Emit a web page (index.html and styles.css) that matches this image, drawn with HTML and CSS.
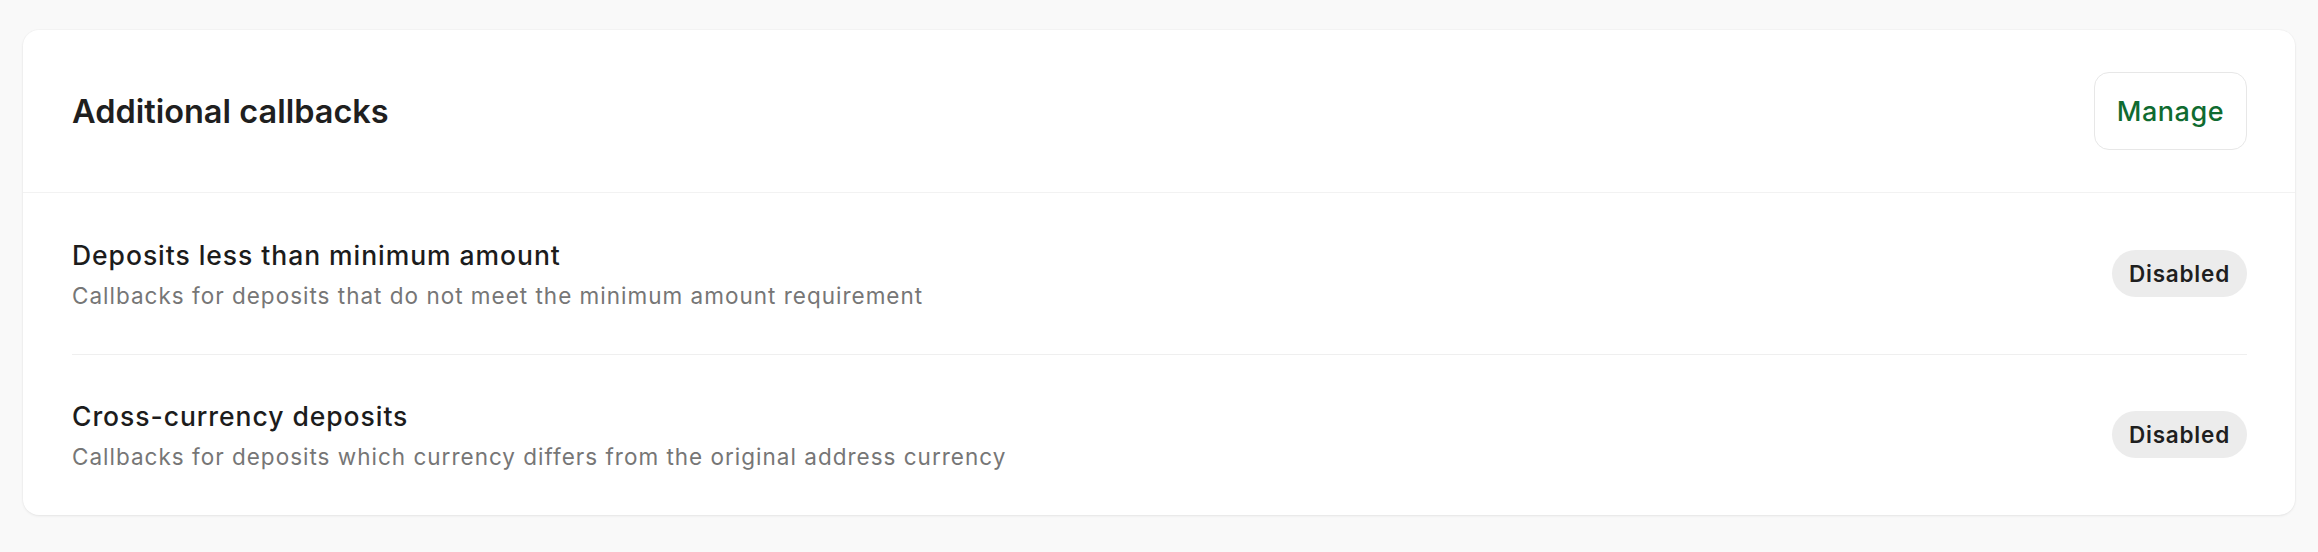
FILE: index.html
```html
<!DOCTYPE html>
<html lang="en">
<head>
<meta charset="utf-8">
<title>Additional callbacks</title>
<link rel="stylesheet" href="styles.css">
</head>
<body>
  <section class="card">
    <header class="card-header">
      <h2 class="card-title">Additional callbacks</h2>
      <button class="btn-manage" type="button">Manage</button>
    </header>
    <div class="rows">
      <div class="row">
        <div class="row-text">
          <div class="row-title">Deposits less than minimum amount</div>
          <div class="row-desc">Callbacks for deposits that do not meet the minimum amount requirement</div>
        </div>
        <span class="badge">Disabled</span>
      </div>
      <div class="row">
        <div class="row-text">
          <div class="row-title">Cross-currency deposits</div>
          <div class="row-desc">Callbacks for deposits which currency differs from the original address currency</div>
        </div>
        <span class="badge">Disabled</span>
      </div>
    </div>
  </section>
</body>
</html>
```

FILE: styles.css
```css
* { box-sizing: border-box; }

html, body {
  margin: 0;
  background: #f9f9f9;
}

body {
  padding: 30px 23px;
  font-family: Inter, "Noto Sans", "Liberation Sans", sans-serif;
  color: #1c1c1c;
}

.card {
  background: #ffffff;
  border-radius: 16px;
  box-shadow: 0 1px 3px rgba(0, 0, 0, 0.07), 0 0 0 1px rgba(0, 0, 0, 0.015);
  height: 485px;
  display: flex;
  flex-direction: column;
}

.card-header {
  height: 163px;
  display: flex;
  align-items: center;
  justify-content: space-between;
  padding: 0 48px 0 49px;
  border-bottom: 1px solid #f2f2f2;
}

.card-title {
  margin: 0;
  font-size: 32.5px;
  font-weight: 600;
  color: #1f1f1f;
}

.btn-manage {
  height: 78px;
  padding: 0 22px;
  background: #ffffff;
  border: 1.5px solid #e7e7e7;
  border-radius: 15px;
  font-family: inherit;
  font-size: 27px;
  font-weight: 500;
  letter-spacing: 0.5px;
  color: #0f6b30;
}

.rows {
  flex: 1;
  display: flex;
  flex-direction: column;
  padding: 0 48px 0 49px;
}

.row {
  flex: 1;
  display: flex;
  align-items: center;
  justify-content: space-between;
}

.row + .row {
  border-top: 1.5px solid #efefef;
}

.row-text {
  display: flex;
  flex-direction: column;
  gap: 6px;
  padding-top: 3px;
}

.row-title {
  font-size: 26.5px;
  line-height: 36px;
  font-weight: 500;
  letter-spacing: 0.95px;
  color: #1c1c1c;
}

.row-desc {
  font-size: 22.5px;
  line-height: 34px;
  letter-spacing: 1px;
  color: #767676;
}

.badge {
  height: 47px;
  padding: 0 17px;
  display: inline-flex;
  align-items: center;
  border-radius: 24px;
  background: #ececec;
  font-size: 22.5px;
  font-weight: 600;
  letter-spacing: 0.8px;
  color: #1f1f1f;
}
```
